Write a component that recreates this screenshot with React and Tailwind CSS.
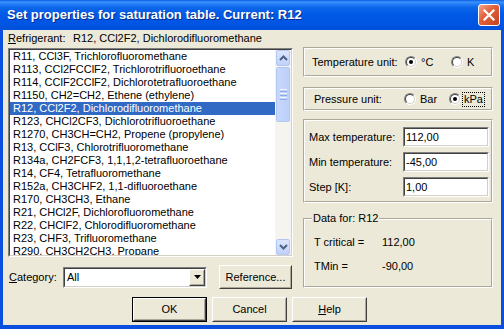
import React from 'react';

const refrigerants = [
  'R11, CCl3F, Trichlorofluoromethane',
  'R113, CCl2FCClF2, Trichlorotrifluoroethane',
  'R114, CClF2CClF2, Dichlorotetrafluoroethane',
  'R1150, CH2=CH2, Ethene (ethylene)',
  'R12, CCl2F2, Dichlorodifluoromethane',
  'R123, CHCl2CF3, Dichlorotrifluoroethane',
  'R1270, CH3CH=CH2, Propene (propylene)',
  'R13, CClF3, Chlorotrifluoromethane',
  'R134a, CH2FCF3, 1,1,1,2-tetrafluoroethane',
  'R14, CF4, Tetrafluoromethane',
  'R152a, CH3CHF2, 1,1-difluoroethane',
  'R170, CH3CH3, Ethane',
  'R21, CHCl2F, Dichlorofluoromethane',
  'R22, CHClF2, Chlorodifluoromethane',
  'R23, CHF3, Trifluoromethane',
  'R290, CH3CH2CH3, Propane',
];

// classic raised button: white/dark outer edge, face/shadow inner edge
const Button = ({ children, className = '', isDefault = false }) => (
  <div className={`${isDefault ? 'border border-black' : ''} ${className}`}>
    <div className="w-full h-full border border-t-white border-l-white border-b-[#404040] border-r-[#404040]">
      <div className="w-full h-full flex items-center justify-center border border-t-[#ece9d8] border-l-[#ece9d8] border-b-[#aca899] border-r-[#aca899] bg-[#ece9d8]">
        {children}
      </div>
    </div>
  </div>
);

const Sunken = ({ children, className = '' }) => (
  <div className={`border border-t-[#808080] border-l-[#808080] border-b-white border-r-white ${className}`}>
    <div className="w-full h-full border border-t-[#404040] border-l-[#404040] border-b-[#d4d0c8] border-r-[#d4d0c8] bg-white">
      {children}
    </div>
  </div>
);

const Group = ({ children, className = '' }) => (
  <div className={`relative border border-t-[#aca899] border-l-[#aca899] border-b-white border-r-white ${className}`}>
    <div className="w-full h-full border border-t-white border-l-white border-b-[#aca899] border-r-[#aca899]">
      {children}
    </div>
  </div>
);

const Radio = ({ checked }) => (
  <span className="block w-[12px] h-[12px] rounded-full border border-t-[#808080] border-l-[#808080] border-b-white border-r-white">
    <span className="flex items-center justify-center w-full h-full rounded-full border border-t-[#404040] border-l-[#404040] border-b-[#d4d0c8] border-r-[#d4d0c8] bg-white">
      {checked && <span className="block w-[4px] h-[4px] rounded-full bg-black" />}
    </span>
  </span>
);

const ScrollButton = ({ up }) => (
  <div className="h-[16px] mx-[1px] rounded-[2px] border border-[#b3c7f5] bg-[linear-gradient(to_bottom,#dbe5fd,#bfd2fb)] flex items-center justify-center">
    <svg width="9" height="6" viewBox="0 0 9 6">
      <polyline
        points={up ? '1,5 4.5,1.5 8,5' : '1,1 4.5,4.5 8,1'}
        fill="none"
        stroke="#4d6185"
        strokeWidth="2"
      />
    </svg>
  </div>
);

export default function App() {
  return (
    <div className="w-[504px] h-[329px] flex flex-col bg-[#0a4fe0] font-['Liberation_Sans',Arial,sans-serif] text-[11px] leading-[13px] text-black select-none">
      {/* title bar */}
      <div className="h-[30px] flex items-center justify-between pl-[7px] pr-[4px] bg-[linear-gradient(to_bottom,#0a5fe7_0%,#3d92fc_7%,#2580f6_13%,#0c66ea_25%,#0059e6_50%,#0055e3_80%,#0050d9_100%)]">
        <span className="text-white font-bold text-[13px] leading-[16px] [text-shadow:1px_1px_#0a2a8a]">
          Set properties for saturation table. Current: R12
        </span>
        <div className="w-[22px] h-[22px] rounded-[3px] border border-white bg-[linear-gradient(135deg,#f3a48a_0%,#e2633e_40%,#c7401c_100%)] flex items-center justify-center">
          <svg width="12" height="12" viewBox="0 0 12 12">
            <path d="M1.5 1.5 L10.5 10.5 M10.5 1.5 L1.5 10.5" stroke="white" strokeWidth="2.2" strokeLinecap="square" />
          </svg>
        </div>
      </div>

      {/* body */}
      <div className="flex-1 mx-[3px] mb-[4px] bg-[#ece9d8] flex flex-col pl-[5px] pr-[8px]">
        <div className="flex gap-[10px]">
          {/* left column */}
          <div className="w-[285px] flex flex-col">
            <div className="h-[18px] pt-[2px] flex">
              <span className="w-[65px]">
                <u>R</u>efrigerant:
              </span>
              <span>R12, CCl2F2, Dichlorodifluoromethane</span>
            </div>

            <Sunken className="h-[209px]">
              <div className="flex h-full overflow-hidden">
                <div className="flex-1 overflow-hidden">
                  {refrigerants.map((r, i) => (
                    <div
                      key={r}
                      className={`h-[13px] pl-[3px] whitespace-nowrap ${i === 4 ? 'bg-[#316ac5] text-white' : ''}`}
                    >
                      {r}
                    </div>
                  ))}
                </div>
                <div className="w-[16px] flex flex-col bg-[#f5f4ef]">
                  <ScrollButton up />
                  <div className="h-[55px] mx-[1px] mt-[1px] rounded-[2px] border border-[#b3c7f5] bg-[linear-gradient(to_right,#c9d8fc,#bcd0fb)] flex flex-col items-center justify-center gap-[1px]">
                    <span className="block w-[7px] h-[1px] bg-[#eef3fe]" />
                    <span className="block w-[7px] h-[1px] bg-[#8cabe9]" />
                    <span className="block w-[7px] h-[1px] bg-[#eef3fe]" />
                    <span className="block w-[7px] h-[1px] bg-[#8cabe9]" />
                    <span className="block w-[7px] h-[1px] bg-[#eef3fe]" />
                    <span className="block w-[7px] h-[1px] bg-[#8cabe9]" />
                  </div>
                  <div className="flex-1" />
                  <ScrollButton />
                </div>
              </div>
            </Sunken>

            <div className="mt-[8px] h-[24px] flex items-center">
              <span className="w-[55px] pl-[1px]">
                <u>C</u>ategory:
              </span>
              <Sunken className="w-[144px] h-[21px]">
                <div className="flex h-full items-center justify-between">
                  <span className="pl-[2px]">All</span>
                  <Button className="w-[16px] h-[17px]">
                    <svg width="7" height="4" viewBox="0 0 7 4">
                      <polygon points="0,0 7,0 3.5,4" fill="black" />
                    </svg>
                  </Button>
                </div>
              </Sunken>
              <Button className="ml-[12px] w-[73px] h-[24px]">Reference...</Button>
            </div>
          </div>

          {/* right column */}
          <div className="w-[190px] pt-[17px] flex flex-col">
            <Group className="h-[30px]">
              <div className="flex h-full items-center pl-[7px]">
                <span className="w-[93px]">Temperature unit:</span>
                <span className="w-[46px] flex items-center gap-[4px]">
                  <Radio checked />
                  <span>°C</span>
                </span>
                <span className="flex items-center gap-[4px]">
                  <Radio />
                  <span>K</span>
                </span>
              </div>
            </Group>

            <Group className="mt-[10px] h-[24px]">
              <div className="flex h-full items-center pl-[9px]">
                <span className="w-[90px]">Pressure unit:</span>
                <span className="w-[45px] flex items-center gap-[4px]">
                  <Radio />
                  <span>Bar</span>
                </span>
                <span className="flex items-center gap-[1px]">
                  <Radio checked />
                  <span className="border border-dotted border-black px-[1px]">kPa</span>
                </span>
              </div>
            </Group>

            <Group className="mt-[8px] h-[84px]">
              <div className="flex flex-col gap-[5px] pt-[6px] pl-[4px]">
                {[
                  ['Max temperature:', '112,00'],
                  ['Min temperature:', '-45,00'],
                  ['Step [K]:', '1,00'],
                ].map(([label, value]) => (
                  <div key={label} className="flex items-center">
                    <span className="w-[94px]">{label}</span>
                    <Sunken className="w-[86px] h-[20px]">
                      <div className="h-full flex items-center pl-[1px]">{value}</div>
                    </Sunken>
                  </div>
                ))}
              </div>
            </Group>

            <Group className="mt-[15px] h-[70px]">
              <span className="absolute -top-[7px] left-[8px] px-[1px] bg-[#ece9d8]">Data for: R12</span>
              <div className="flex flex-col gap-[11px] pt-[16px] pl-[9px]">
                <div className="flex">
                  <span className="w-[68px]">T critical =</span>
                  <span>112,00</span>
                </div>
                <div className="flex">
                  <span className="w-[68px]">TMin =</span>
                  <span>-90,00</span>
                </div>
              </div>
            </Group>
          </div>
        </div>

        {/* dialog buttons */}
        <div className="mt-[8px] flex gap-[5px] pl-[124px]">
          <Button isDefault className="w-[75px] h-[25px]">OK</Button>
          <Button className="w-[75px] h-[25px]">Cancel</Button>
          <Button className="w-[75px] h-[25px]">
            <span>
              <u>H</u>elp
            </span>
          </Button>
        </div>
      </div>
    </div>
  );
}
